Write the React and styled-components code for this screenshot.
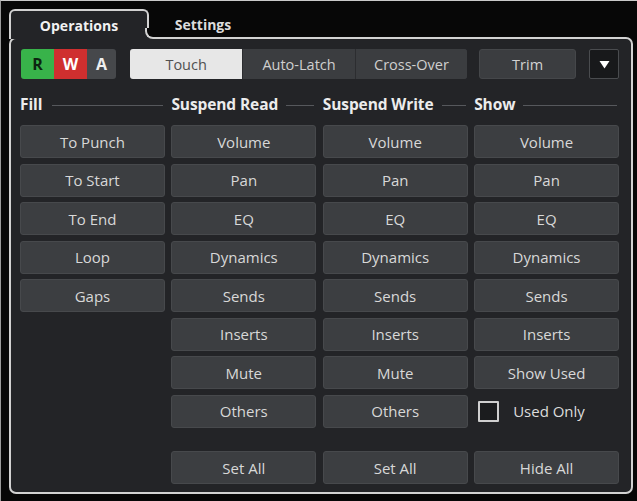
import React from "react";
import styled, { createGlobalStyle } from "styled-components";

const Global = createGlobalStyle`
  html, body { margin: 0; padding: 0; background: #070707; }
  body { font-family: "Open Sans", "Noto Sans", Arial, sans-serif; }
  * { box-sizing: border-box; }
`;

const Frame = styled.div`
  width: 637px;
  height: 501px;
  border-top: 1px solid #c9c9c9;
  border-left: 1px solid #9a9a9a;
  padding: 8px 0 0 8px;
  background: #070707;
`;

const TabRow = styled.div`
  display: flex;
  align-items: stretch;
  height: 30px;
  margin-bottom: -2px;
  position: relative;
  z-index: 1;
`;

const ActiveTab = styled.div`
  position: relative;
  width: 140px;
  border: 2px solid #d2d2d2;
  border-bottom: none;
  border-radius: 6px 6px 0 0;
  background: #232427;
  color: #f2f2f2;
  font-weight: 700;
  font-size: 14px;
  display: flex;
  align-items: center;
  justify-content: center;
  padding-top: 1px;
  &::before {
    content: "";
    position: absolute;
    left: calc(100% - 2px);
    bottom: 0;
    width: 9px;
    height: 9px;
    background: #232427;
  }
  &::after {
    content: "";
    position: absolute;
    left: calc(100% - 2px);
    bottom: 0;
    width: 9px;
    height: 9px;
    background: #070707;
    border-left: 2px solid #d2d2d2;
    border-bottom: 2px solid #d2d2d2;
    border-bottom-left-radius: 8px;
  }
`;

const Tab = styled.div`
  width: 108px;
  color: #dcdcdc;
  font-weight: 700;
  font-size: 14px;
  display: flex;
  align-items: center;
  justify-content: center;
  padding-top: 1px;
`;

const Panel = styled.div`
  width: 624px;
  border: 2px solid #d2d2d2;
  border-radius: 7px;
  background: #232427;
  padding: 10px 12px 8px 9px;
`;

const Toolbar = styled.div`
  display: flex;
  align-items: center;
  height: 30px;
`;

const RwaGroup = styled.div`
  display: flex;
  height: 30px;
  margin-left: 1px;
  border-radius: 3px;
  overflow: hidden;
`;

const RwaBox = styled.div`
  width: ${(p) => p.$w}px;
  background: ${(p) => p.$bg};
  color: ${(p) => p.$fg};
  font-weight: 700;
  font-size: 16px;
  display: flex;
  align-items: center;
  justify-content: center;
`;

const Segmented = styled.div`
  display: flex;
  height: 30px;
  margin-left: 14px;
  border-radius: 3px;
  overflow: hidden;
  background: #3a3c3f;
`;

const Segment = styled.div`
  width: 112.5px;
  display: flex;
  align-items: center;
  justify-content: center;
  font-size: 14.5px;
  background: ${(p) => (p.$active ? "#e7e7e7" : "#3b3d40")};
  color: ${(p) => (p.$active ? "#505050" : "#cfcfcf")};
  border-left: ${(p) => (p.$first ? "none" : "1px solid #2c2d30")};
`;

const ToolButton = styled.div`
  width: 97px;
  height: 30px;
  margin-left: 12px;
  border-radius: 3px;
  background: #3b3d40;
  border: 1px solid #45474a;
  color: #d2d2d2;
  font-size: 14.5px;
  display: flex;
  align-items: center;
  justify-content: center;
`;

const DropButton = styled.div`
  width: 30px;
  height: 30px;
  margin-left: 13px;
  border-radius: 2px;
  background: #18191b;
  border: 1px solid #4a4c4f;
  display: flex;
  align-items: center;
  justify-content: center;
`;

const Columns = styled.div`
  display: grid;
  grid-template-columns: repeat(4, 1fr);
  column-gap: 6.5px;
  margin-top: 14px;
`;

const Column = styled.div`
  display: flex;
  flex-direction: column;
`;

const Header = styled.div`
  height: 22px;
  display: flex;
  align-items: center;
  margin-bottom: 10px;
  font-weight: 700;
  font-size: 15.5px;
  letter-spacing: -0.1px;
  color: #ececec;
  white-space: nowrap;
`;

const HeaderLine = styled.div`
  flex: 1;
  height: 1px;
  background: #56585c;
  margin-left: ${(p) => p.$ml || 8}px;
  margin-right: 2px;
  margin-top: 2px;
`;

const Stack = styled.div`
  display: flex;
  flex-direction: column;
  gap: 5.5px;
`;

const Button = styled.div`
  height: 33px;
  border-radius: 3px;
  background: #3c3e41;
  border: 1px solid #47494c;
  color: #d8d8d8;
  font-size: 15px;
  display: flex;
  align-items: center;
  justify-content: center;
`;

const CheckRow = styled.div`
  height: 33px;
  display: flex;
  align-items: center;
  padding-left: 4px;
  gap: 14px;
  color: #dcdcdc;
  font-size: 15px;
`;

const CheckBox = styled.div`
  width: 21px;
  height: 21px;
  border: 2px solid #cfcfcf;
  border-radius: 1px;
  background: #1b1c1e;
`;

const BottomRow = styled.div`
  display: grid;
  grid-template-columns: repeat(4, 1fr);
  column-gap: 6.5px;
  margin-top: 23.5px;
`;

const Empty = styled.div``;

const fill = ["To Punch", "To Start", "To End", "Loop", "Gaps"];
const params = ["Volume", "Pan", "EQ", "Dynamics", "Sends", "Inserts", "Mute", "Others"];
const show = ["Volume", "Pan", "EQ", "Dynamics", "Sends", "Inserts", "Show Used"];

export default function App() {
  return (
    <>
      <Global />
      <Frame>
        <TabRow>
          <ActiveTab>Operations</ActiveTab>
          <Tab>Settings</Tab>
        </TabRow>
        <Panel>
          <Toolbar>
            <RwaGroup>
              <RwaBox $w={33} $bg="#38b34a" $fg="#0c2410">R</RwaBox>
              <RwaBox $w={33} $bg="#cf2f2f" $fg="#ffffff">W</RwaBox>
              <RwaBox $w={29} $bg="#46484b" $fg="#eeeeee">A</RwaBox>
            </RwaGroup>
            <Segmented>
              <Segment $active $first>Touch</Segment>
              <Segment>Auto-Latch</Segment>
              <Segment>Cross-Over</Segment>
            </Segmented>
            <ToolButton>Trim</ToolButton>
            <DropButton>
              <svg width="11" height="9" viewBox="0 0 11 9">
                <polygon points="0.5,1 10.5,1 5.5,8.5" fill="#ffffff" />
              </svg>
            </DropButton>
          </Toolbar>
          <Columns>
            <Column>
              <Header>
                Fill
                <HeaderLine $ml={10} />
              </Header>
              <Stack>
                {fill.map((t) => (
                  <Button key={t}>{t}</Button>
                ))}
              </Stack>
            </Column>
            <Column>
              <Header>
                Suspend Read
                <HeaderLine />
              </Header>
              <Stack>
                {params.map((t) => (
                  <Button key={t}>{t}</Button>
                ))}
              </Stack>
            </Column>
            <Column>
              <Header>
                Suspend Write
                <HeaderLine />
              </Header>
              <Stack>
                {params.map((t) => (
                  <Button key={t}>{t}</Button>
                ))}
              </Stack>
            </Column>
            <Column>
              <Header>
                Show
                <HeaderLine />
              </Header>
              <Stack>
                {show.map((t) => (
                  <Button key={t}>{t}</Button>
                ))}
                <CheckRow>
                  <CheckBox />
                  Used Only
                </CheckRow>
              </Stack>
            </Column>
          </Columns>
          <BottomRow>
            <Empty />
            <Button>Set All</Button>
            <Button>Set All</Button>
            <Button>Hide All</Button>
          </BottomRow>
        </Panel>
      </Frame>
    </>
  );
}
